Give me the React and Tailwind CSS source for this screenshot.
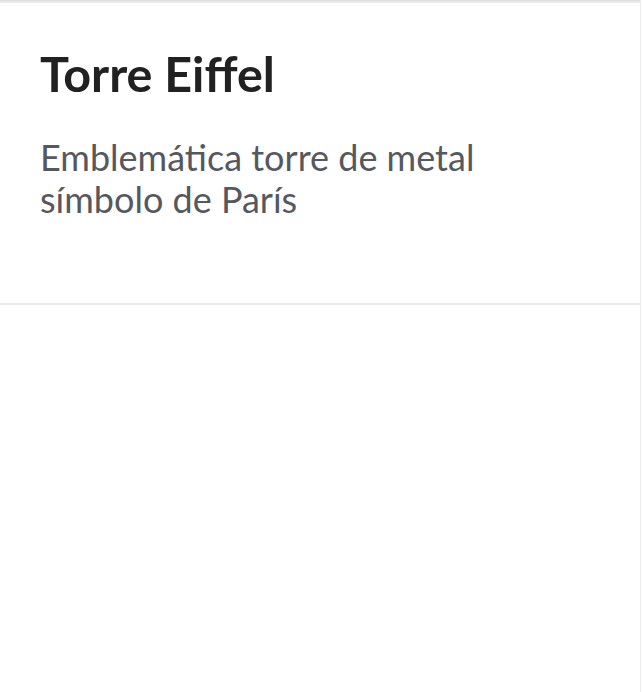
const FONT = { fontFamily: "Lato, 'Open Sans', sans-serif" };

export default function App() {
  return (
    <div className="w-[642px] h-[692px] bg-white" style={FONT}>
      <div className="w-[641px] h-full border-r border-[#ededed] flex flex-col">
        <div className="h-[3px] bg-gradient-to-b from-[#dcdcdc] to-[#efefef]" />

        {/* card */}
        <div className="h-[302px] border-b-2 border-[#e9e9ee] px-10 pt-[41px]">
          <h1 className="text-[48.5px] leading-[58px] font-bold text-[#212121]">Torre Eiffel</h1>
          <p className="mt-[34px] text-[36px] leading-[42px] text-[#55595e] max-w-[560px]">
            Emblemática torre de metal símbolo de París
          </p>
        </div>

        <div className="flex-1" />
      </div>
    </div>
  );
}
